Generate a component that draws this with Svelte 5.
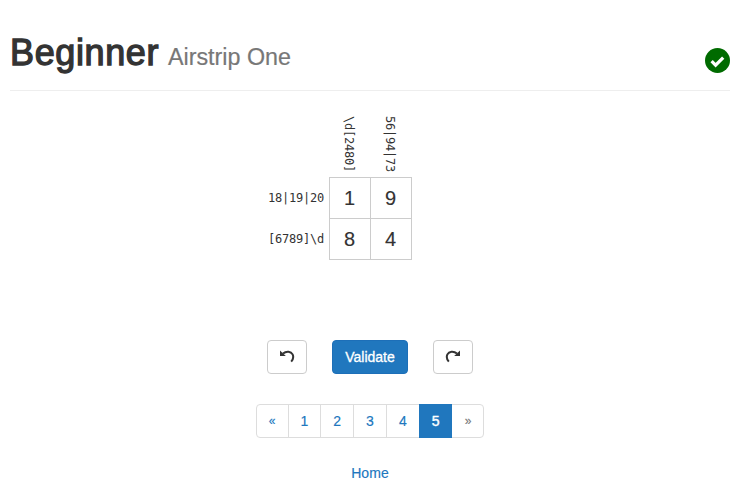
<script>
  const columns = ['\\d[2480]', '56|94|73'];
  const rows = [
    { clue: '18|19|20', cells: [1, 9] },
    { clue: '[6789]\\d', cells: [8, 4] }
  ];
  const pages = ['«', '1', '2', '3', '4', '5', '»'];
</script>

<main>
  <header>
    <h1><span class="level">Beginner</span><small>Airstrip One</small></h1>
    <svg class="solved" viewBox="0 0 25 25" role="img" aria-label="Solved">
      <circle cx="12.5" cy="12.5" r="12.5" fill="#006b00" />
      <path d="M6.6 13.2 L10.6 17.2 L18.2 9.6" fill="none" stroke="#fff" stroke-width="3.2" />
    </svg>
  </header>

  <table>
    <thead>
      <tr>
        <th></th>
        {#each columns as clue}
          <th class="top"><span>{clue}</span></th>
        {/each}
      </tr>
    </thead>
    <tbody>
      {#each rows as row}
        <tr>
          <th class="side"><span>{row.clue}</span></th>
          {#each row.cells as cell}
            <td>{cell}</td>
          {/each}
        </tr>
      {/each}
    </tbody>
  </table>

  <div class="actions">
    <button aria-label="Undo">
      <svg viewBox="0 0 16 16">
        <path d="M4 4.6 C7.4 1.6 12 2.2 13.6 5.4 C14.8 8 14 10.6 12.2 12.6" />
        <path class="head" d="M1 1.6 V7 H6.8 Z" />
      </svg>
    </button>
    <button class="primary">Validate</button>
    <button aria-label="Redo">
      <svg viewBox="0 0 16 16">
        <path d="M12 4.6 C8.6 1.6 4 2.2 2.4 5.4 C1.2 8 2 10.6 3.8 12.6" />
        <path class="head" d="M15 1.6 V7 H9.2 Z" />
      </svg>
    </button>
  </div>

  <nav>
    {#each pages as page}
      <a href="#top" class:active={page === '5'} class:disabled={page === '»'} class:quote={page === '«' || page === '»'}>{page}</a>
    {/each}
  </nav>

  <a class="home" href="#top">Home</a>
</main>

<style>
  :global(body) {
    background: #fff;
  }
  main {
    box-sizing: border-box;
    width: 740px;
    height: 496px;
    padding: 0 10px;
    overflow: hidden;
    display: flex;
    flex-direction: column;
    align-items: center;
    font: 14px/20px 'Liberation Sans', Arial, sans-serif;
    color: #333;
  }
  header {
    box-sizing: border-box;
    width: 100%;
    height: 91px;
    padding-top: 33px;
    border-bottom: 1px solid #eee;
    display: flex;
    justify-content: space-between;
  }
  h1 {
    margin: 0;
    font-size: 36px;
    line-height: 40px;
    font-weight: 400;
    white-space: nowrap;
  }
  .level {
    display: inline-block;
    width: 158px;
    letter-spacing: 0.62px;
    -webkit-text-stroke: 1.3px #333;
  }
  small {
    font-size: 23.3px;
    line-height: 1;
    color: #777;
    -webkit-text-stroke: 0.2px #777;
  }
  .solved {
    width: 25px;
    height: 25px;
    margin-top: 15px;
  }
  table {
    border-collapse: collapse;
    margin: 21px 0 0 -62px;
  }
  th {
    padding: 0;
    font: 12px/20px 'DejaVu Sans Mono', monospace;
    letter-spacing: -0.22px;
  }
  .top {
    height: 65px;
    vertical-align: bottom;
  }
  .top span {
    writing-mode: vertical-rl;
    display: block;
    width: 20px;
    margin: 0 10px 5px;
    text-align: right;
  }
  .side {
    width: 62px;
    text-align: right;
  }
  .side span {
    margin-right: 4.5px;
  }
  td {
    box-sizing: border-box;
    width: 41px;
    height: 41px;
    padding: 0;
    border: 1px solid #ccc;
    text-align: center;
    font-size: 20px;
    line-height: 40px;
    -webkit-text-stroke: 0.15px #333;
  }
  .actions {
    display: flex;
    gap: 25px;
    margin-top: 80px;
  }
  button {
    box-sizing: border-box;
    width: 40px;
    height: 34px;
    padding: 0;
    border: 1px solid #ccc;
    border-radius: 4px;
    background: #fff;
    color: #333;
    font: inherit;
    display: flex;
    align-items: center;
    justify-content: center;
  }
  .primary {
    width: 76px;
    border-color: #1d6fb8;
    background: #2077be;
    color: #fff;
    -webkit-text-stroke: 0.3px #fff;
  }
  button svg {
    width: 16px;
    height: 16px;
  }
  button path {
    fill: none;
    stroke: #333;
    stroke-width: 2;
  }
  button .head {
    fill: #333;
    stroke: none;
  }
  nav {
    display: flex;
    margin-top: 30px;
  }
  a {
    color: #2077be;
    text-decoration: none;
  }
  nav a {
    box-sizing: border-box;
    width: 33.8px;
    height: 34px;
    margin-left: -1px;
    border: 1px solid #ddd;
    line-height: 32px;
    text-align: center;
    -webkit-text-stroke: 0.15px currentColor;
  }
  nav a:first-child {
    margin-left: 0;
    border-radius: 4px 0 0 4px;
  }
  nav a:last-child {
    border-radius: 0 4px 4px 0;
  }
  nav .quote {
    width: 33px;
    font-size: 12px;
  }
  nav .active {
    position: relative;
    background: #2077be;
    border-color: #2077be;
    color: #fff;
    -webkit-text-stroke: 0.4px #fff;
  }
  nav .disabled {
    color: #777;
  }
  .home {
    margin-top: 25px;
    letter-spacing: 0.1px;
    -webkit-text-stroke: 0.15px currentColor;
  }
</style>
